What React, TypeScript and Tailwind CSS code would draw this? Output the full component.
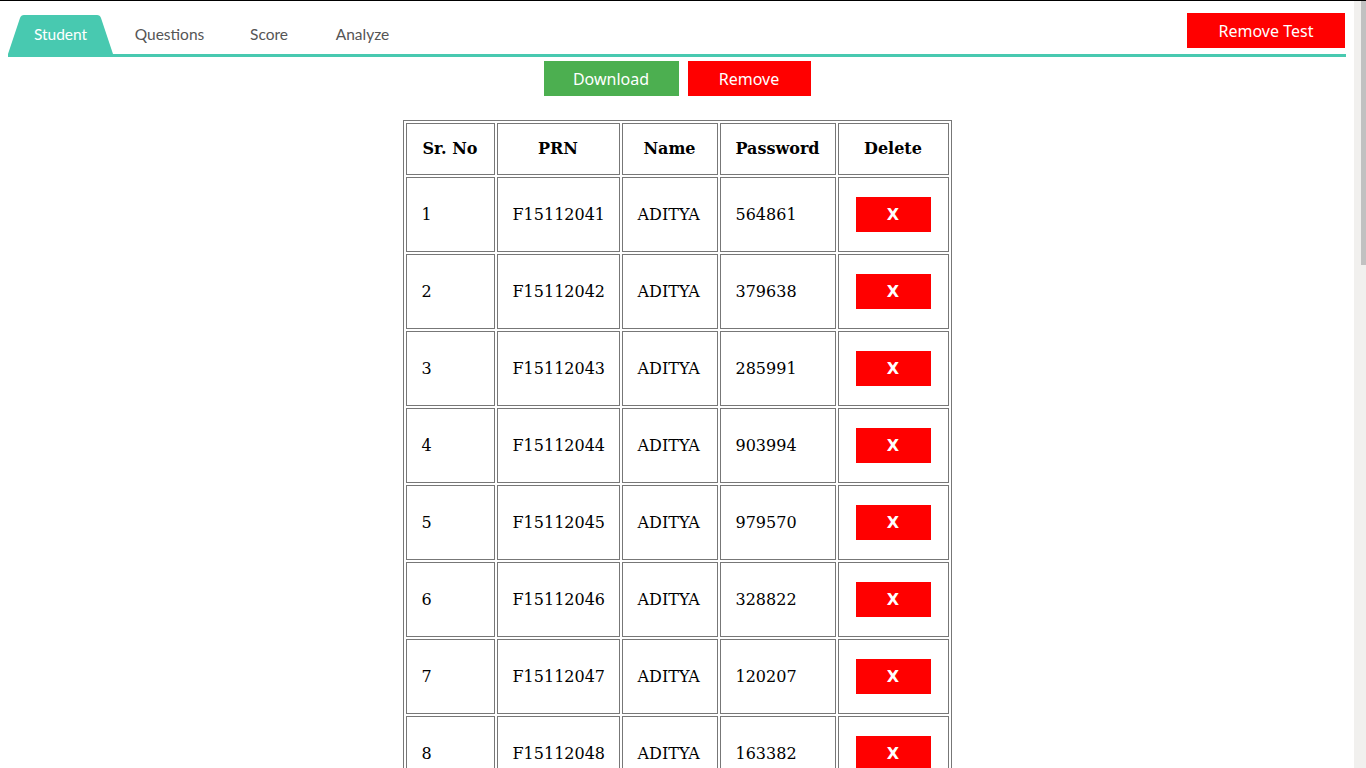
import React from "react";

const passwords = ["564861", "379638", "285991", "903994", "979570", "328822", "120207", "163382"];

const students = passwords.map((pw, i) => ({
  sr: i + 1,
  prn: `F151120${41 + i}`,
  name: "ADITYA",
  password: pw,
}));

const tabs = [
  { label: "Student", width: "w-[105px]", active: true },
  { label: "Questions", width: "w-[113px]", active: false },
  { label: "Score", width: "w-[86px]", active: false },
  { label: "Analyze", width: "w-[101px]", active: false },
];

function Tab({ label, width, active }: { label: string; width: string; active: boolean }) {
  return (
    <div className={`relative flex h-[39px] items-center justify-center ${width}`}>
      {active && (
        <svg className="absolute inset-0 h-full w-full" viewBox="0 0 105 39" preserveAspectRatio="none">
          <path d="M0 39 L12 3 Q13 0 16 0 L89 0 Q92 0 93 3 L105 39 Z" fill="#48c9b0" />
        </svg>
      )}
      <span
        className={`relative text-[15.5px] ${active ? "text-white" : "text-[#555]"}`}
        style={{ fontFamily: "Lato, 'Open Sans', sans-serif" }}
      >
        {label}
      </span>
    </div>
  );
}

export default function App() {
  const btnFont = { fontFamily: "'Noto Sans', 'Open Sans', sans-serif" };

  return (
    <div className="flex h-[768px] overflow-hidden border-t border-black bg-white">
      <div className="flex-1 overflow-hidden px-2">
        {/* Tabs header */}
        <div className="flex items-start justify-between border-b-[3px] border-[#48c9b0]">
          <div className="mt-[14px] flex items-end">
            {tabs.map((t) => (
              <Tab key={t.label} {...t} />
            ))}
          </div>
          <button
            className="mr-[1px] mt-[12px] h-[35px] w-[158px] bg-[#ff0000] text-[16px] text-white"
            style={btnFont}
          >
            Remove Test
          </button>
        </div>

        {/* Actions */}
        <div className="mt-[4px] flex justify-center gap-[9px]">
          <button className="h-[35px] w-[135px] bg-[#4caf50] text-[16px] text-white" style={btnFont}>
            Download
          </button>
          <button className="h-[35px] w-[123px] bg-[#ff0000] text-[16px] text-white" style={btnFont}>
            Remove
          </button>
        </div>

        {/* Students table */}
        <div className="mt-[24px] flex justify-center">
          <table
            className="w-[549px] table-fixed border-separate border-spacing-[2px] border border-[#777] text-[16px] text-black"
            style={{ fontFamily: "'DejaVu Serif', serif" }}
          >
            <thead>
              <tr className="h-[52px]">
                <th className="w-[89px] border border-[#777] px-[15px] font-bold">Sr. No</th>
                <th className="w-[123px] border border-[#777] px-[15px] font-bold">PRN</th>
                <th className="w-[96px] border border-[#777] px-[15px] font-bold">Name</th>
                <th className="w-[116px] border border-[#777] px-[15px] font-bold">Password</th>
                <th className="w-[111px] border border-[#777] px-[15px] font-bold">Delete</th>
              </tr>
            </thead>
            <tbody>
              {students.map((s) => (
                <tr key={s.sr} className="h-[75px]">
                  <td className="border border-[#777] px-[15px] text-left">{s.sr}</td>
                  <td className="border border-[#777] px-[15px] text-left">{s.prn}</td>
                  <td className="border border-[#777] px-[15px] text-left">{s.name}</td>
                  <td className="border border-[#777] px-[15px] text-left">{s.password}</td>
                  <td className="border border-[#777] px-0 text-center">
                    <button
                      className="mx-auto flex h-[35px] w-[75px] items-center justify-center bg-[#ff0000] text-[16px] font-bold text-white"
                      style={{ fontFamily: "'DejaVu Sans', sans-serif" }}
                    >
                      X
                    </button>
                  </td>
                </tr>
              ))}
            </tbody>
          </table>
        </div>
      </div>

      {/* Scrollbar */}
      <div className="flex w-[12px] justify-end bg-[#f1f0ee]">
        <div className="h-[264px] w-[5px] bg-[#c1c1c1]" />
      </div>
    </div>
  );
}
